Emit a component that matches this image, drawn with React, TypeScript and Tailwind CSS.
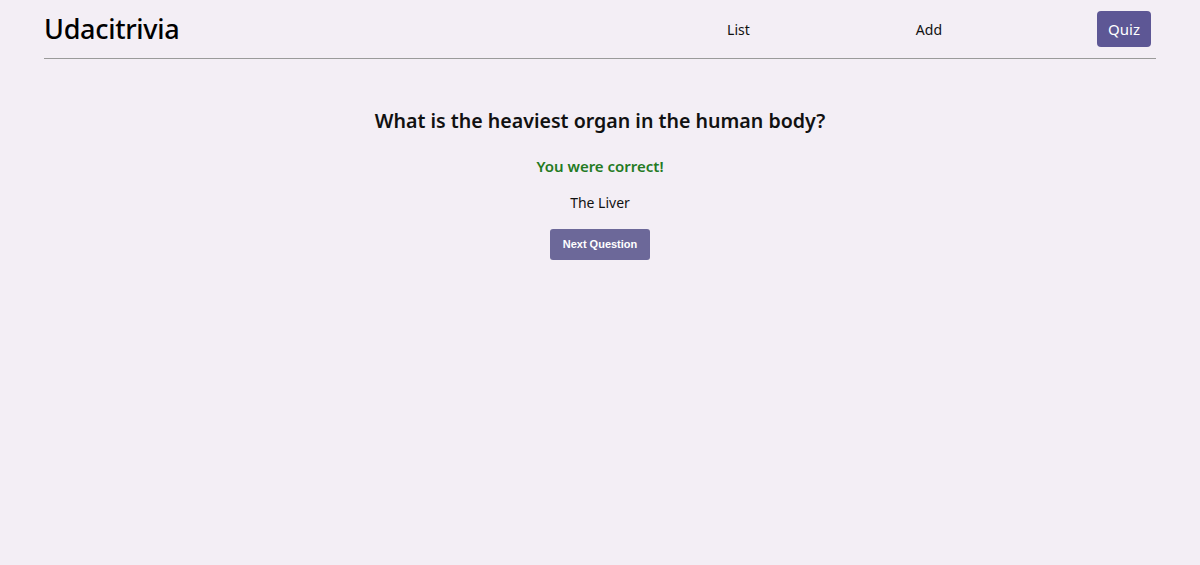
export default function App() {
  return (
    <div className="min-h-[565px] bg-[#f3eef5] text-[#111] font-['Noto_Sans',sans-serif]">
      {/* header */}
      <header className="mx-[44px] flex items-center h-[59px] border-b border-[#9a9a9a]">
        <h1 className="flex-1 text-[27px] font-medium tracking-[-0.3px] text-black">Udacitrivia</h1>
        <nav className="flex items-center pr-[5px] text-[14px]">
          <a className="cursor-pointer">List</a>
          <a className="ml-[166px] cursor-pointer">Add</a>
          <button className="ml-[155px] h-[36px] w-[54px] rounded-[4px] bg-[#5d5795] text-[15px] text-white">
            Quiz
          </button>
        </nav>
      </header>

      {/* quiz result */}
      <main className="flex flex-col items-center pt-[47px]">
        <h2 className="text-[19.6px] font-semibold leading-[30px]">What is the heaviest organ in the human body?</h2>
        <div className="mt-[19px] text-[15px] font-semibold text-[#237a23]">You were correct!</div>
        <div className="mt-[14px] text-[14px]">The Liver</div>
        <button className="mt-[16px] h-[31px] w-[100px] rounded-[3px] bg-[#6c6899] font-['Liberation_Sans',sans-serif] text-[11px] font-bold text-white">
          Next Question
        </button>
      </main>
    </div>
  );
}
